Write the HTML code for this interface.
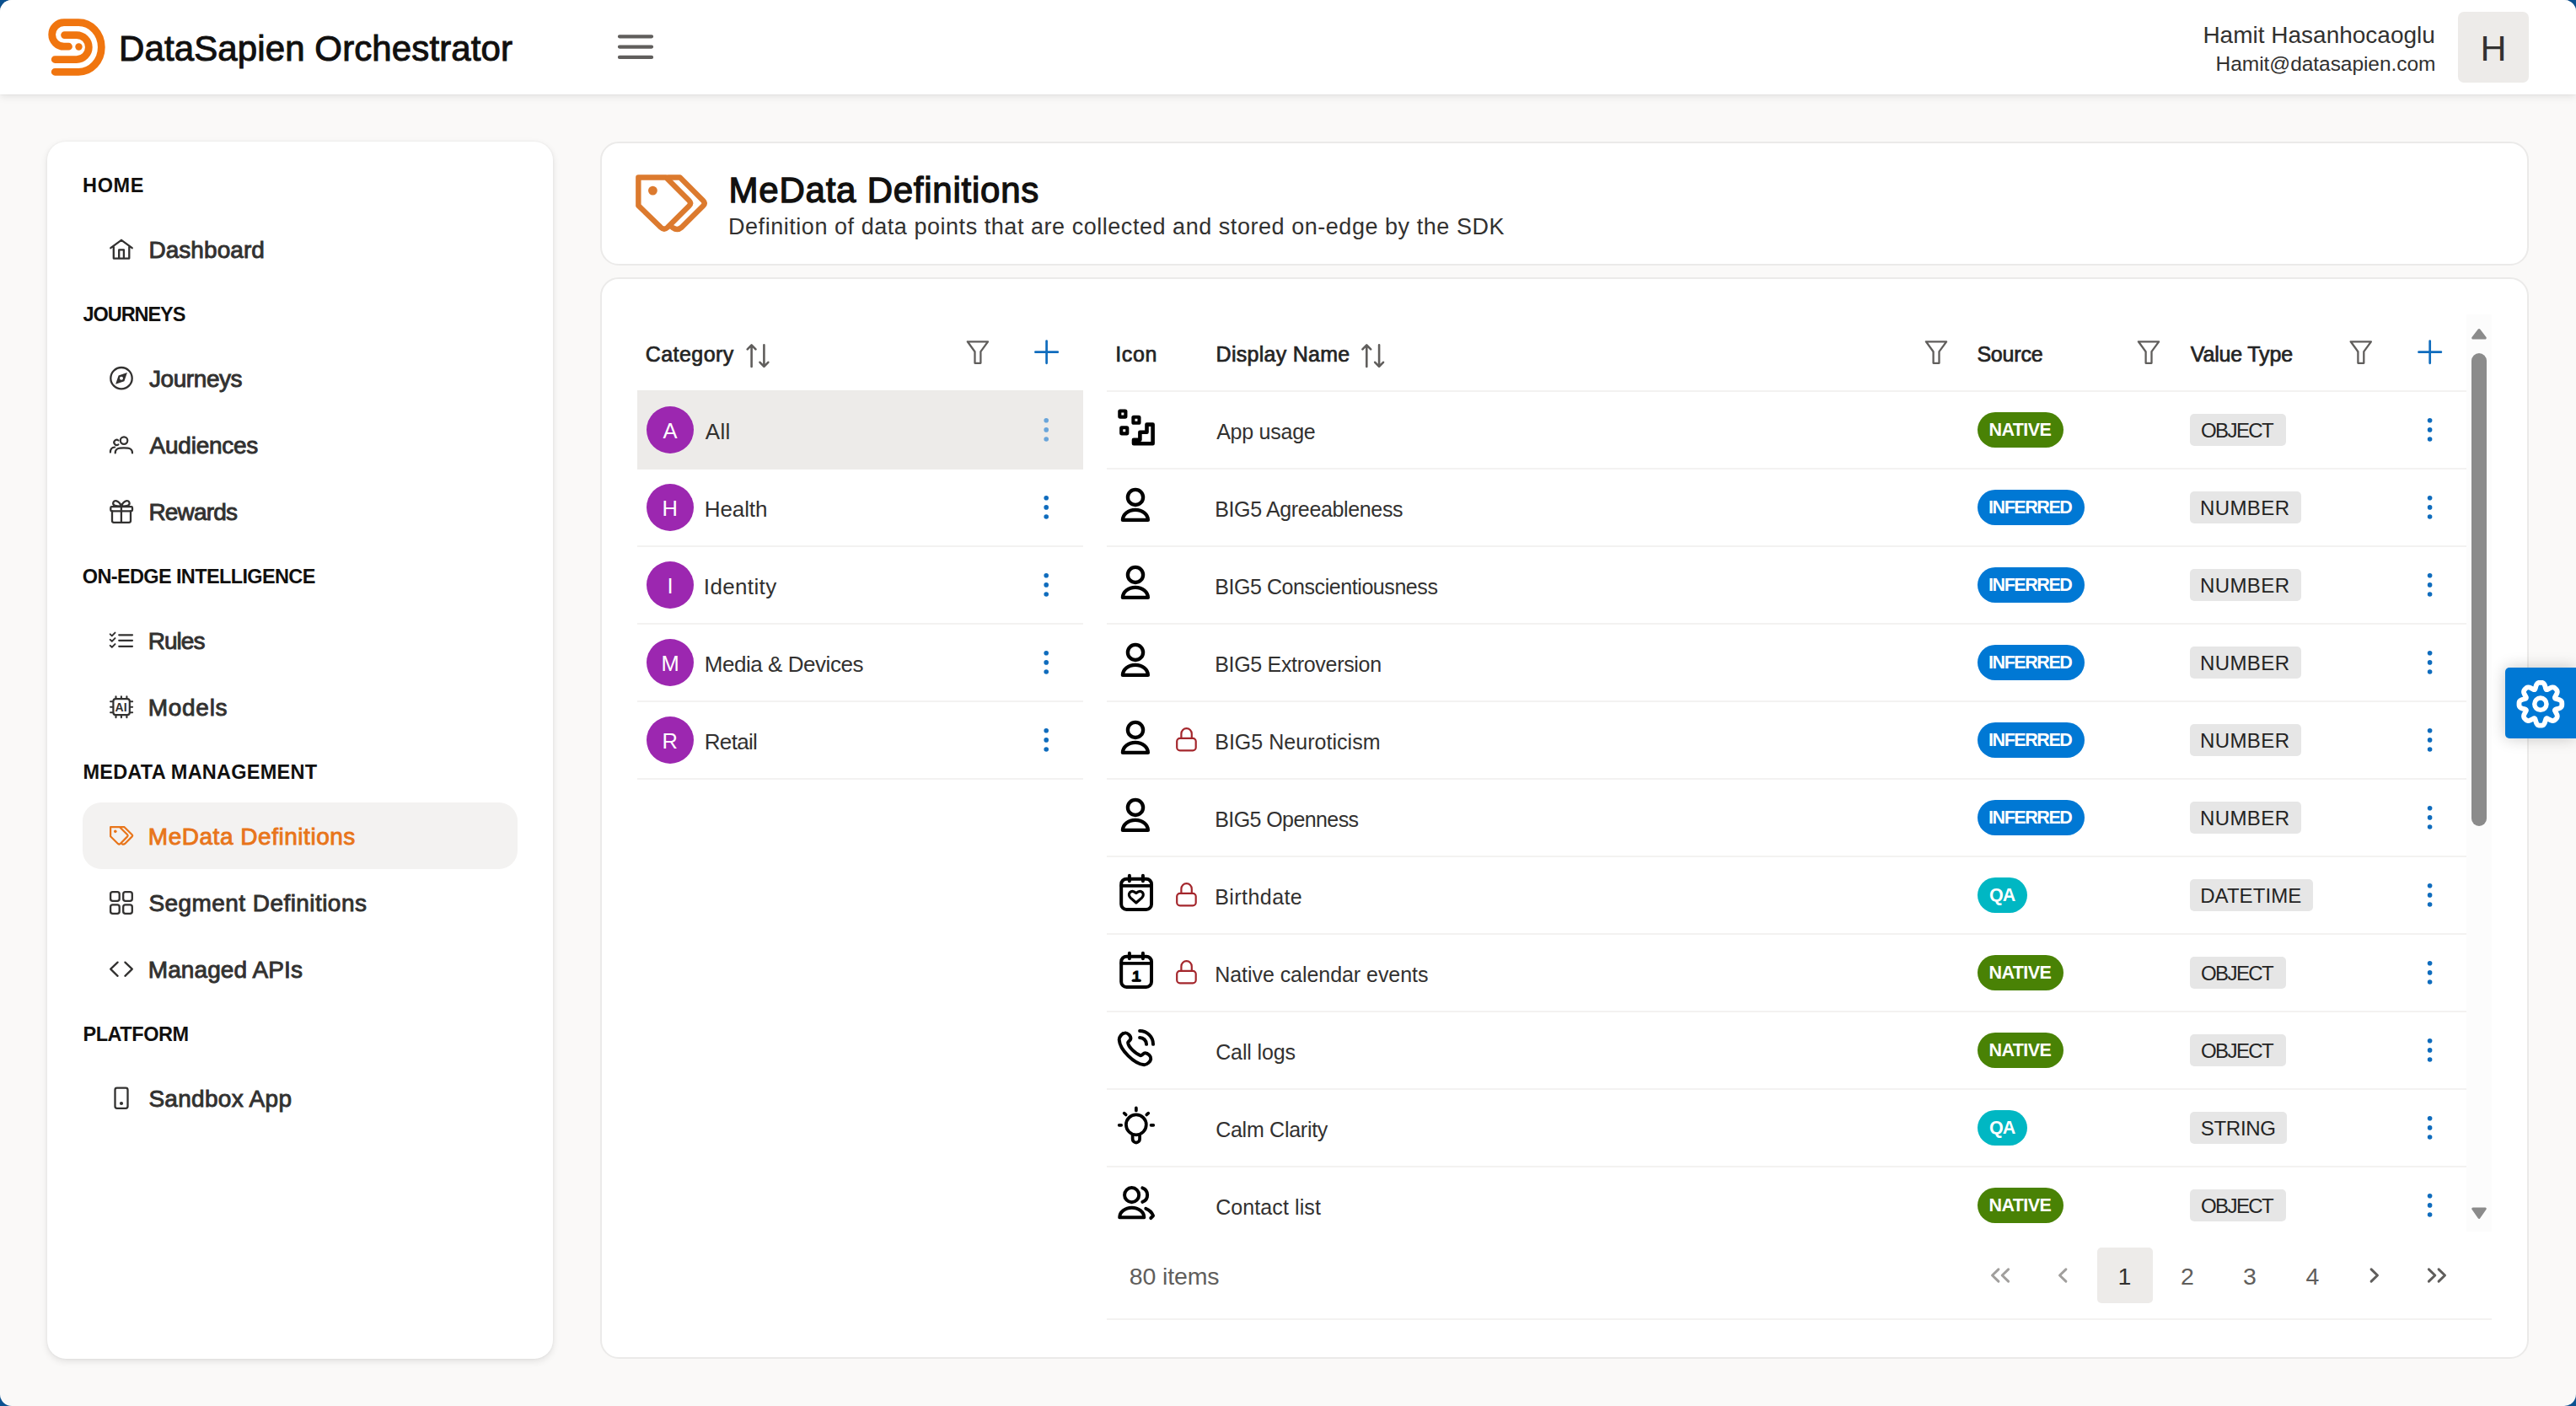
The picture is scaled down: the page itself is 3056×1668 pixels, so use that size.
<!DOCTYPE html>
<html lang="en">
<head>
<meta charset="utf-8">
<title>DataSapien Orchestrator</title>
<style>
*{box-sizing:border-box;margin:0;padding:0}
html,body{width:3056px;height:1668px;overflow:hidden}
body{background:#faf9f8;font-family:"Liberation Sans",sans-serif;color:#323130;position:relative}
svg{display:block;position:absolute;overflow:visible}
.t{position:absolute;white-space:nowrap;line-height:1}
.b{position:absolute}
#hdr{left:0;top:0;width:3056px;height:112px;background:#fff;box-shadow:0 3px 10px rgba(0,0,0,.09),0 0 2px rgba(0,0,0,.08)}
#side{left:56px;top:168px;width:600px;height:1444px;background:#fff;border-radius:22px;box-shadow:0 3px 8px rgba(0,0,0,.10),0 0 3px rgba(0,0,0,.06)}
.card{background:#fff;border:2px solid #ebeae9;border-radius:22px}
.hl{position:absolute;height:2px;background:#f3f2f1}
.av{position:absolute;left:767px;width:56px;height:56px;border-radius:50%;background:#9c27b0}
.bd{position:absolute;left:2346px;height:42px;border-radius:21px}
.vt{position:absolute;left:2598px;height:38px;border-radius:5px;background:#e6e6e6}
.s{fill:none;stroke-linecap:round;stroke-linejoin:round}
</style>
</head>
<body>
<div class="b" style="left:0;top:0;width:3056px;height:1668px;background:#0d5291"></div>
<div class="b" style="left:0;top:0;width:3056px;height:1668px;background:#faf9f8;border-radius:14px"></div>
<header>
<div class="b" id="hdr" style="border-radius:14px 14px 0 0"></div>
<svg style="left:50px;top:15px" width="85" height="82" viewBox="0 0 1457 1406"><g class="s" stroke="#f0750f" stroke-width="150"><path d="M260 1205H740A465 502 0 0 0 740 200H445A245 245 0 0 0 445 690H540"/><path d="M455 455H700A248 248 0 0 1 700 952H260"/></g><circle cx="745" cy="695" r="72" fill="#f0750f"/></svg>
<div class="t" style="left:141.0px;top:37.1px;font-size:42px;color:#11100f;-webkit-text-stroke:1px #11100f;letter-spacing:0.11px;">DataSapien Orchestrator</div>
<svg style="left:0;top:0" width="3056" height="112" viewBox="0 0 3056 112"><g class="s" stroke="#605e5c" stroke-width="4.3"><path d="M735 43.3H773M735 55.6H773M735 67.9H773"/></g></svg>
<div class="t" style="left:2613.4px;top:28.0px;font-size:28px;">Hamit Hasanhocaoglu</div>
<div class="t" style="left:2628.6px;top:64.3px;font-size:24.5px;letter-spacing:-0.05px;">Hamit@datasapien.com</div>
<div class="b" style="left:2916px;top:14px;width:84px;height:84px;border-radius:7px;background:#edebe9"></div>
<div class="t" style="left:2942.5px;top:36.4px;font-size:43px;">H</div>
</header>
<nav>
<div class="b" id="side"></div>
<div class="b" style="left:98px;top:952px;width:516px;height:79px;border-radius:22px;background:#f3f2f1"></div>
<div class="t" style="left:98.0px;top:208.8px;font-size:23.5px;font-weight:bold;color:#11100f;letter-spacing:0.67px;">HOME</div>
<div class="t" style="left:176.4px;top:283.1px;font-size:28px;-webkit-text-stroke:0.9px #323130;letter-spacing:0.06px;">Dashboard</div>
<div class="t" style="left:98.6px;top:361.9px;font-size:23.5px;font-weight:bold;color:#11100f;letter-spacing:-1.07px;">JOURNEYS</div>
<div class="t" style="left:177.0px;top:435.9px;font-size:28px;-webkit-text-stroke:0.9px #323130;letter-spacing:-0.43px;">Journeys</div>
<div class="t" style="left:177.6px;top:515.2px;font-size:28px;-webkit-text-stroke:0.9px #323130;letter-spacing:-0.25px;">Audiences</div>
<div class="t" style="left:176.4px;top:594.0px;font-size:28px;-webkit-text-stroke:0.9px #323130;letter-spacing:-0.83px;">Rewards</div>
<div class="t" style="left:97.8px;top:672.7px;font-size:23.5px;font-weight:bold;color:#11100f;letter-spacing:-0.63px;">ON-EDGE INTELLIGENCE</div>
<div class="t" style="left:175.8px;top:746.8px;font-size:28px;-webkit-text-stroke:0.9px #323130;letter-spacing:-1.00px;">Rules</div>
<div class="t" style="left:175.8px;top:826.1px;font-size:28px;-webkit-text-stroke:0.9px #323130;letter-spacing:0.70px;">Models</div>
<div class="t" style="left:98.4px;top:904.8px;font-size:23.5px;font-weight:bold;color:#11100f;letter-spacing:0.25px;">MEDATA MANAGEMENT</div>
<div class="t" style="left:175.8px;top:978.7px;font-size:28px;color:#e8751a;-webkit-text-stroke:0.9px #e8751a;letter-spacing:0.53px;">MeData Definitions</div>
<div class="t" style="left:176.4px;top:1057.6px;font-size:28px;-webkit-text-stroke:0.9px #323130;letter-spacing:0.44px;">Segment Definitions</div>
<div class="t" style="left:175.8px;top:1137.3px;font-size:28px;-webkit-text-stroke:0.9px #323130;letter-spacing:0.09px;">Managed APIs</div>
<div class="t" style="left:98.4px;top:1215.9px;font-size:23.5px;font-weight:bold;color:#11100f;letter-spacing:-0.43px;">PLATFORM</div>
<div class="t" style="left:176.4px;top:1290.1px;font-size:28px;-webkit-text-stroke:0.9px #323130;letter-spacing:0.30px;">Sandbox App</div>
<svg style="left:0;top:0" width="3056" height="1668" viewBox="0 0 3056 1668"><path class="s" stroke="#323130" stroke-width="2.3" d="M131.3 294.2L144 284.8L156.7 294.2M134.8 292.5V306.6H153.3V292.5M141.2 306.6V296.4H146.9V306.6" stroke-linejoin="miter" stroke-linecap="butt"/><circle class="s" stroke="#323130" stroke-width="2.3" cx="144" cy="448.7" r="12.7"/><path fill="#323130" fill-rule="evenodd" d="M150.9 441.9L147.4 452.2L137.1 455.7L140.6 445.4ZM144 446.8a2 2 0 1 0 0 4a2 2 0 1 0 0-4Z"/><circle class="s" stroke="#323130" stroke-width="2.2" cx="147.05" cy="522.6" r="4.25"/><path class="s" stroke="#323130" stroke-width="2.2" d="M136.7 537.4C136.7 532.6 139.5 531.4 146.9 531.4S157 532.6 157 537.4" stroke-linecap="butt"/><path class="s" stroke="#323130" stroke-width="2.2" d="M140.4 522.5A3.1 3.1 0 1 0 140.4 527.3"/><path class="s" stroke="#323130" stroke-width="2.2" d="M130.9 536.6C130.9 532.5 132.5 530.7 136.2 530.5" stroke-linecap="butt"/><rect class="s" stroke="#323130" stroke-width="2.3" x="131.3" y="601.2" width="25.7" height="5.1" rx="1.2"/><path class="s" stroke="#323130" stroke-width="2.3" d="M133 606.3V617.8a2 2 0 0 0 2 2H153a2 2 0 0 0 2-2V606.3M143.9 601.2V619.8"/><path class="s" stroke="#323130" stroke-width="2.3" d="M143.9 600.6C141.3 593.7 134.9 592.3 134.2 596.9C133.9 599.8 137 600.6 143.9 600.6C150.8 600.6 153.9 599.8 153.6 596.9C152.9 592.3 146.5 593.7 143.9 600.6"/><path class="s" stroke="#323130" stroke-width="2.2" d="M141.2 753.3H157"/><path class="s" stroke="#323130" stroke-width="2" d="M130.7 752.4l2.1 2l3.7-3.8" stroke-linejoin="miter"/><path class="s" stroke="#323130" stroke-width="2.2" d="M141.2 759.8H157"/><path class="s" stroke="#323130" stroke-width="2" d="M130.7 758.9l2.1 2l3.7-3.8" stroke-linejoin="miter"/><path class="s" stroke="#323130" stroke-width="2.2" d="M141.2 766.8H157"/><path class="s" stroke="#323130" stroke-width="2" d="M130.7 765.9l2.1 2l3.7-3.8" stroke-linejoin="miter"/><rect class="s" stroke="#323130" stroke-width="2.2" x="134.4" y="829.2" width="19.4" height="18.9" rx="2.8"/><path class="s" stroke="#323130" stroke-width="2.1" d="M137.5 826.3V828.5M137.5 848.8V851.2M131.1 832.2H133.3M154.9 832.2H157.1M143.9 826.3V828.5M143.9 848.8V851.2M131.1 838.7H133.3M154.9 838.7H157.1M150.4 826.3V828.5M150.4 848.8V851.2M131.1 845.2H133.3M154.9 845.2H157.1"/><text x="143.7" y="843.5" text-anchor="middle" font-family="Liberation Sans,sans-serif" font-weight="bold" font-size="14" fill="#323130" letter-spacing=".2">AI</text><rect class="s" stroke="#323130" stroke-width="2.3" x="131.1" y="1058.2" width="10.6" height="10.6" rx="2.6"/><rect class="s" stroke="#323130" stroke-width="2.3" x="146.2" y="1058.2" width="10.6" height="10.6" rx="2.6"/><rect class="s" stroke="#323130" stroke-width="2.3" x="131.1" y="1073.3" width="10.6" height="10.6" rx="2.6"/><rect class="s" stroke="#323130" stroke-width="2.3" x="146.2" y="1073.3" width="10.6" height="10.6" rx="2.6"/><path class="s" stroke="#323130" stroke-width="2.3" d="M139.6 1141.6L131.2 1149.7L139.6 1157.8M148.4 1141.6L156.8 1149.7L148.4 1157.8" stroke-linejoin="miter"/><rect class="s" stroke="#323130" stroke-width="2.3" x="136.5" y="1290.6" width="15" height="24.2" rx="2.3"/><circle cx="144" cy="1309" r="2.1" fill="#323130"/></svg><svg style="left:92.0px;top:961.4px" width="86.68" height="66.67" viewBox="0 0 1828 1406"><g class="s" stroke="#e8751a" stroke-width="46"><path d="M825 425H1055L1248 618Q1270 640 1248 662L1068 842Q1040 868 1012 842L825 660Z"/><path d="M1075 425H1172L1365 618Q1387 640 1365 662L1185 842Q1150 872 1112 845"/></g><circle cx="945" cy="535" r="38" fill="#e8751a"/></svg>
</nav>
<main>
<div class="b card" style="left:712px;top:168px;width:2288px;height:147px"></div>
<div class="b card" style="left:712px;top:329px;width:2288px;height:1283px"></div>
<svg style="left:640.0px;top:150.0px" width="260.03" height="200.00" viewBox="0 0 1828 1406"><g class="s" stroke="#dc7a2e" stroke-width="45"><path d="M825 425H1055L1248 618Q1270 640 1248 662L1068 842Q1040 868 1012 842L825 660Z"/><path d="M1075 425H1172L1365 618Q1387 640 1365 662L1185 842Q1150 872 1112 845"/></g><circle cx="945" cy="535" r="38" fill="#dc7a2e"/></svg>
<div class="t" style="left:864.6px;top:204.6px;font-size:42px;color:#11100f;-webkit-text-stroke:1.3px #11100f;letter-spacing:0.76px;">MeData Definitions</div>
<div class="t" style="left:864.0px;top:255.5px;font-size:27px;letter-spacing:0.54px;">Definition of data points that are collected and stored on-edge by the SDK</div>
<div class="t" style="left:765.8px;top:407.9px;font-size:25px;color:#242424;-webkit-text-stroke:0.7px #242424;letter-spacing:0.43px;">Category</div>
<div class="hl" style="left:756px;top:463px;width:529px"></div>
<div class="b" style="left:756px;top:463px;width:529px;height:94px;background:#edebe9"></div>
<div class="av" style="top:482px"></div>
<div class="t" style="left:786.5px;top:499.4px;font-size:25.5px;color:#fff;">A</div>
<div class="t" style="left:836.8px;top:498.9px;font-size:26px;letter-spacing:0.25px;">All</div>
<div class="hl" style="left:756px;top:647px;width:529px"></div>
<div class="av" style="top:574px"></div>
<div class="t" style="left:785.5px;top:591.4px;font-size:25.5px;color:#fff;">H</div>
<div class="t" style="left:835.8px;top:590.9px;font-size:26px;letter-spacing:-0.10px;">Health</div>
<div class="hl" style="left:756px;top:739px;width:529px"></div>
<div class="av" style="top:666px"></div>
<div class="t" style="left:791.5px;top:683.4px;font-size:25.5px;color:#fff;">I</div>
<div class="t" style="left:834.8px;top:682.9px;font-size:26px;letter-spacing:0.36px;">Identity</div>
<div class="hl" style="left:756px;top:831px;width:529px"></div>
<div class="av" style="top:758px"></div>
<div class="t" style="left:784.5px;top:775.4px;font-size:25.5px;color:#fff;">M</div>
<div class="t" style="left:835.8px;top:774.9px;font-size:26px;letter-spacing:-0.46px;">Media &amp; Devices</div>
<div class="hl" style="left:756px;top:923px;width:529px"></div>
<div class="av" style="top:850px"></div>
<div class="t" style="left:785.5px;top:867.4px;font-size:25.5px;color:#fff;">R</div>
<div class="t" style="left:835.8px;top:866.9px;font-size:26px;letter-spacing:-0.70px;">Retail</div>
<div class="t" style="left:1323.2px;top:407.8px;font-size:25px;color:#242424;-webkit-text-stroke:0.7px #242424;letter-spacing:0.67px;">Icon</div>
<div class="t" style="left:1442.6px;top:407.8px;font-size:25px;color:#242424;-webkit-text-stroke:0.7px #242424;letter-spacing:0.27px;">Display Name</div>
<div class="t" style="left:2345.4px;top:407.8px;font-size:25px;color:#242424;-webkit-text-stroke:0.7px #242424;letter-spacing:-0.20px;">Source</div>
<div class="t" style="left:2598.8px;top:407.8px;font-size:25px;color:#242424;-webkit-text-stroke:0.7px #242424;letter-spacing:-0.17px;">Value Type</div>
<div class="hl" style="left:1313px;top:463px;width:1613px"></div>
<div class="hl" style="left:1313px;top:555px;width:1613px"></div>
<div class="t" style="left:1443.2px;top:499.6px;font-size:25px;letter-spacing:-0.25px;">App usage</div>
<div class="bd" style="top:489px;width:102px;background:#498205"></div>
<div class="t" style="left:2359.5px;top:500.1px;font-size:21.5px;font-weight:bold;color:#fff;letter-spacing:-0.60px;">NATIVE</div>
<div class="vt" style="top:491px;width:114px"></div>
<div class="t" style="left:2611.0px;top:499.1px;font-size:24px;color:#242424;letter-spacing:-1.60px;">OBJECT</div>
<div class="hl" style="left:1313px;top:647px;width:1613px"></div>
<div class="t" style="left:1441.2px;top:591.6px;font-size:25px;letter-spacing:-0.35px;">BIG5 Agreeableness</div>
<div class="bd" style="top:581px;width:127px;background:#0078d4"></div>
<div class="t" style="left:2359.0px;top:592.1px;font-size:21.5px;font-weight:bold;color:#fff;letter-spacing:-1.43px;">INFERRED</div>
<div class="vt" style="top:583px;width:131.5px"></div>
<div class="t" style="left:2610.0px;top:591.1px;font-size:24px;color:#242424;letter-spacing:0.40px;">NUMBER</div>
<div class="hl" style="left:1313px;top:739px;width:1613px"></div>
<div class="t" style="left:1441.2px;top:683.6px;font-size:25px;letter-spacing:-0.43px;">BIG5 Conscientiousness</div>
<div class="bd" style="top:673px;width:127px;background:#0078d4"></div>
<div class="t" style="left:2359.0px;top:684.1px;font-size:21.5px;font-weight:bold;color:#fff;letter-spacing:-1.43px;">INFERRED</div>
<div class="vt" style="top:675px;width:131.5px"></div>
<div class="t" style="left:2610.0px;top:683.1px;font-size:24px;color:#242424;letter-spacing:0.40px;">NUMBER</div>
<div class="hl" style="left:1313px;top:831px;width:1613px"></div>
<div class="t" style="left:1441.2px;top:775.6px;font-size:25px;letter-spacing:-0.31px;">BIG5 Extroversion</div>
<div class="bd" style="top:765px;width:127px;background:#0078d4"></div>
<div class="t" style="left:2359.0px;top:776.1px;font-size:21.5px;font-weight:bold;color:#fff;letter-spacing:-1.43px;">INFERRED</div>
<div class="vt" style="top:767px;width:131.5px"></div>
<div class="t" style="left:2610.0px;top:775.1px;font-size:24px;color:#242424;letter-spacing:0.40px;">NUMBER</div>
<div class="hl" style="left:1313px;top:923px;width:1613px"></div>
<div class="t" style="left:1441.2px;top:867.6px;font-size:25px;letter-spacing:0.03px;">BIG5 Neuroticism</div>
<div class="bd" style="top:857px;width:127px;background:#0078d4"></div>
<div class="t" style="left:2359.0px;top:868.1px;font-size:21.5px;font-weight:bold;color:#fff;letter-spacing:-1.43px;">INFERRED</div>
<div class="vt" style="top:859px;width:131.5px"></div>
<div class="t" style="left:2610.0px;top:867.1px;font-size:24px;color:#242424;letter-spacing:0.40px;">NUMBER</div>
<div class="hl" style="left:1313px;top:1015px;width:1613px"></div>
<div class="t" style="left:1441.2px;top:959.6px;font-size:25px;letter-spacing:-0.58px;">BIG5 Openness</div>
<div class="bd" style="top:949px;width:127px;background:#0078d4"></div>
<div class="t" style="left:2359.0px;top:960.1px;font-size:21.5px;font-weight:bold;color:#fff;letter-spacing:-1.43px;">INFERRED</div>
<div class="vt" style="top:951px;width:131.5px"></div>
<div class="t" style="left:2610.0px;top:959.1px;font-size:24px;color:#242424;letter-spacing:0.40px;">NUMBER</div>
<div class="hl" style="left:1313px;top:1107px;width:1613px"></div>
<div class="t" style="left:1441.2px;top:1051.6px;font-size:25px;letter-spacing:0.44px;">Birthdate</div>
<div class="bd" style="top:1041px;width:59px;background:#00b7c3"></div>
<div class="t" style="left:2360.0px;top:1052.1px;font-size:21.5px;font-weight:bold;color:#fff;letter-spacing:-1.00px;">QA</div>
<div class="vt" style="top:1043px;width:146px"></div>
<div class="t" style="left:2610.2px;top:1051.1px;font-size:24px;color:#242424;letter-spacing:0.07px;">DATETIME</div>
<div class="hl" style="left:1313px;top:1199px;width:1613px"></div>
<div class="t" style="left:1441.2px;top:1143.6px;font-size:25px;letter-spacing:-0.05px;">Native calendar events</div>
<div class="bd" style="top:1133px;width:102px;background:#498205"></div>
<div class="t" style="left:2359.5px;top:1144.1px;font-size:21.5px;font-weight:bold;color:#fff;letter-spacing:-0.60px;">NATIVE</div>
<div class="vt" style="top:1135px;width:114px"></div>
<div class="t" style="left:2611.0px;top:1143.1px;font-size:24px;color:#242424;letter-spacing:-1.60px;">OBJECT</div>
<div class="hl" style="left:1313px;top:1291px;width:1613px"></div>
<div class="t" style="left:1442.2px;top:1235.6px;font-size:25px;letter-spacing:-0.12px;">Call logs</div>
<div class="bd" style="top:1225px;width:102px;background:#498205"></div>
<div class="t" style="left:2359.5px;top:1236.1px;font-size:21.5px;font-weight:bold;color:#fff;letter-spacing:-0.60px;">NATIVE</div>
<div class="vt" style="top:1227px;width:114px"></div>
<div class="t" style="left:2611.0px;top:1235.1px;font-size:24px;color:#242424;letter-spacing:-1.60px;">OBJECT</div>
<div class="hl" style="left:1313px;top:1383px;width:1613px"></div>
<div class="t" style="left:1442.2px;top:1327.6px;font-size:25px;letter-spacing:-0.27px;">Calm Clarity</div>
<div class="bd" style="top:1317px;width:59px;background:#00b7c3"></div>
<div class="t" style="left:2360.0px;top:1328.1px;font-size:21.5px;font-weight:bold;color:#fff;letter-spacing:-1.00px;">QA</div>
<div class="vt" style="top:1319px;width:115px"></div>
<div class="t" style="left:2610.8px;top:1327.1px;font-size:24px;color:#242424;letter-spacing:-0.30px;">STRING</div>
<div class="t" style="left:1442.2px;top:1419.6px;font-size:25px;letter-spacing:0.09px;">Contact list</div>
<div class="bd" style="top:1409px;width:102px;background:#498205"></div>
<div class="t" style="left:2359.5px;top:1420.1px;font-size:21.5px;font-weight:bold;color:#fff;letter-spacing:-0.60px;">NATIVE</div>
<div class="vt" style="top:1411px;width:114px"></div>
<div class="t" style="left:2611.0px;top:1419.1px;font-size:24px;color:#242424;letter-spacing:-1.60px;">OBJECT</div>
<svg style="left:0;top:0" width="3056" height="1668" viewBox="0 0 3056 1668"><path class="s" stroke="#605e5c" stroke-width="2.6" stroke-linejoin="miter" d="M891.6 435V409.6M886.7 414.4L891.6 409.4L896.5 414.4M906.4 409.2V434.6M901.5 429.8L906.4 434.8L911.3 429.8"/><path class="s" stroke="#605e5c" stroke-width="2.3" stroke-linejoin="miter" stroke-linecap="butt" d="M1147.8 405.3H1172.0L1163.4 417.2V430.8H1156.5V417.2Z"/><path class="s" stroke="#0f6cbd" stroke-width="2.7" d="M1228.4 417.7H1254.8M1241.6 404.6V430.8"/><path class="s" stroke="#605e5c" stroke-width="2.6" stroke-linejoin="miter" d="M1621.3 435V409.6M1616.4 414.4L1621.3 409.4L1626.2 414.4M1636.1 409.2V434.6M1631.2 429.8L1636.1 434.8L1641.0 429.8"/><path class="s" stroke="#605e5c" stroke-width="2.3" stroke-linejoin="miter" stroke-linecap="butt" d="M2284.9 405.3H2309.1L2300.5 417.2V430.8H2293.6V417.2Z"/><path class="s" stroke="#605e5c" stroke-width="2.3" stroke-linejoin="miter" stroke-linecap="butt" d="M2536.9 405.3H2561.1L2552.5 417.2V430.8H2545.6V417.2Z"/><path class="s" stroke="#605e5c" stroke-width="2.3" stroke-linejoin="miter" stroke-linecap="butt" d="M2788.7 405.3H2812.9L2804.3 417.2V430.8H2797.4V417.2Z"/><path class="s" stroke="#0f6cbd" stroke-width="2.7" d="M2869.5 417.7H2895.9M2882.7 404.6V430.8"/><circle cx="1241.2" cy="498.8" r="2.8" fill="#6aa5da"/><circle cx="1241.2" cy="509.9" r="2.8" fill="#6aa5da"/><circle cx="1241.2" cy="521.0" r="2.8" fill="#6aa5da"/><circle cx="1241.2" cy="590.8" r="2.8" fill="#0f6cbd"/><circle cx="1241.2" cy="601.9" r="2.8" fill="#0f6cbd"/><circle cx="1241.2" cy="613.0" r="2.8" fill="#0f6cbd"/><circle cx="1241.2" cy="682.8" r="2.8" fill="#0f6cbd"/><circle cx="1241.2" cy="693.9" r="2.8" fill="#0f6cbd"/><circle cx="1241.2" cy="705.0" r="2.8" fill="#0f6cbd"/><circle cx="1241.2" cy="774.8" r="2.8" fill="#0f6cbd"/><circle cx="1241.2" cy="785.9" r="2.8" fill="#0f6cbd"/><circle cx="1241.2" cy="797.0" r="2.8" fill="#0f6cbd"/><circle cx="1241.2" cy="866.8" r="2.8" fill="#0f6cbd"/><circle cx="1241.2" cy="877.9" r="2.8" fill="#0f6cbd"/><circle cx="1241.2" cy="889.0" r="2.8" fill="#0f6cbd"/><circle cx="2882.6" cy="498.8" r="2.8" fill="#0f6cbd"/><circle cx="2882.6" cy="509.9" r="2.8" fill="#0f6cbd"/><circle cx="2882.6" cy="521.0" r="2.8" fill="#0f6cbd"/><circle cx="2882.6" cy="590.8" r="2.8" fill="#0f6cbd"/><circle cx="2882.6" cy="601.9" r="2.8" fill="#0f6cbd"/><circle cx="2882.6" cy="613.0" r="2.8" fill="#0f6cbd"/><circle cx="2882.6" cy="682.8" r="2.8" fill="#0f6cbd"/><circle cx="2882.6" cy="693.9" r="2.8" fill="#0f6cbd"/><circle cx="2882.6" cy="705.0" r="2.8" fill="#0f6cbd"/><circle cx="2882.6" cy="774.8" r="2.8" fill="#0f6cbd"/><circle cx="2882.6" cy="785.9" r="2.8" fill="#0f6cbd"/><circle cx="2882.6" cy="797.0" r="2.8" fill="#0f6cbd"/><circle cx="2882.6" cy="866.8" r="2.8" fill="#0f6cbd"/><circle cx="2882.6" cy="877.9" r="2.8" fill="#0f6cbd"/><circle cx="2882.6" cy="889.0" r="2.8" fill="#0f6cbd"/><circle cx="2882.6" cy="958.8" r="2.8" fill="#0f6cbd"/><circle cx="2882.6" cy="969.9" r="2.8" fill="#0f6cbd"/><circle cx="2882.6" cy="981.0" r="2.8" fill="#0f6cbd"/><circle cx="2882.6" cy="1050.8" r="2.8" fill="#0f6cbd"/><circle cx="2882.6" cy="1061.9" r="2.8" fill="#0f6cbd"/><circle cx="2882.6" cy="1073.0" r="2.8" fill="#0f6cbd"/><circle cx="2882.6" cy="1142.8" r="2.8" fill="#0f6cbd"/><circle cx="2882.6" cy="1153.9" r="2.8" fill="#0f6cbd"/><circle cx="2882.6" cy="1165.0" r="2.8" fill="#0f6cbd"/><circle cx="2882.6" cy="1234.8" r="2.8" fill="#0f6cbd"/><circle cx="2882.6" cy="1245.9" r="2.8" fill="#0f6cbd"/><circle cx="2882.6" cy="1257.0" r="2.8" fill="#0f6cbd"/><circle cx="2882.6" cy="1326.8" r="2.8" fill="#0f6cbd"/><circle cx="2882.6" cy="1337.9" r="2.8" fill="#0f6cbd"/><circle cx="2882.6" cy="1349.0" r="2.8" fill="#0f6cbd"/><circle cx="2882.6" cy="1418.8" r="2.8" fill="#0f6cbd"/><circle cx="2882.6" cy="1429.9" r="2.8" fill="#0f6cbd"/><circle cx="2882.6" cy="1441.0" r="2.8" fill="#0f6cbd"/><rect class="s" stroke="#a4262c" stroke-width="2.2" x="1396.2" y="875.9" width="22.5" height="14.4" rx="3.6"/><path class="s" stroke="#a4262c" stroke-width="2.2" d="M1401.4 875.9V870.4A6.2 6.2 0 0 1 1413.8 870.4V875.9"/><rect class="s" stroke="#a4262c" stroke-width="2.2" x="1396.2" y="1059.9" width="22.5" height="14.4" rx="3.6"/><path class="s" stroke="#a4262c" stroke-width="2.2" d="M1401.4 1059.9V1054.4A6.2 6.2 0 0 1 1413.8 1054.4V1059.9"/><rect class="s" stroke="#a4262c" stroke-width="2.2" x="1396.2" y="1151.9" width="22.5" height="14.4" rx="3.6"/><path class="s" stroke="#a4262c" stroke-width="2.2" d="M1401.4 1151.9V1146.4A6.2 6.2 0 0 1 1413.8 1146.4V1151.9"/><g class="s" stroke="#000" stroke-width="4.1" stroke-linejoin="round"><rect x="1328.3" y="487.5" width="7.1" height="7.1" rx=".6"/><rect x="1344.4" y="494.7" width="7.1" height="7.1" rx=".6"/><rect x="1330.2" y="507.3" width="7.1" height="7.1" rx=".6"/><path stroke-width="4.6" d="M1345 526.2H1367.6V503.6H1360.5V512.7H1352.4V521.7H1345Z"/></g><g class="s" stroke="#000" stroke-width="4.3" transform="translate(0 0)"><circle cx="1347" cy="589.9" r="9.1"/><path d="M1331.9 616.9A15 12.1 0 0 1 1361.9 616.9Z"/></g><g class="s" stroke="#000" stroke-width="4.3" transform="translate(0 92)"><circle cx="1347" cy="589.9" r="9.1"/><path d="M1331.9 616.9A15 12.1 0 0 1 1361.9 616.9Z"/></g><g class="s" stroke="#000" stroke-width="4.3" transform="translate(0 184)"><circle cx="1347" cy="589.9" r="9.1"/><path d="M1331.9 616.9A15 12.1 0 0 1 1361.9 616.9Z"/></g><g class="s" stroke="#000" stroke-width="4.3" transform="translate(0 276)"><circle cx="1347" cy="589.9" r="9.1"/><path d="M1331.9 616.9A15 12.1 0 0 1 1361.9 616.9Z"/></g><g class="s" stroke="#000" stroke-width="4.3" transform="translate(0 368)"><circle cx="1347" cy="589.9" r="9.1"/><path d="M1331.9 616.9A15 12.1 0 0 1 1361.9 616.9Z"/></g></svg><svg style="left:1315px;top:1025px" width="70" height="70" viewBox="0 0 1406 1406"><g class="s" stroke="#000" stroke-width="80"><rect x="305" y="355" width="720" height="730" rx="125"/><path stroke-width="72" d="M305 520H1025"/><path d="M500 275V405M822 275V405"/><path stroke-width="64" d="M660 925L525 805C435 720 535 585 660 692C785 585 885 720 795 805Z"/></g></svg><svg style="left:1315px;top:1117px" width="70" height="70" viewBox="0 0 1406 1406"><g class="s" stroke="#000" stroke-width="80"><rect x="305" y="355" width="720" height="730" rx="125"/><path stroke-width="72" d="M305 520H1025"/><path d="M500 275V405M822 275V405"/></g><text x="665" y="945" text-anchor="middle" font-family="Liberation Sans,sans-serif" font-weight="bold" font-size="340" fill="#000" stroke="#000" stroke-width="22">1</text><g class="s" stroke="#000" stroke-width="62"><path d="M585 930H750"/></g><g></g></svg><svg style="left:1315px;top:1210px" width="70" height="70" viewBox="0 0 1406 1406"><g class="s" stroke="#000" stroke-width="80"><path d="M390 310C450 300 540 380 530 450C525 490 470 510 465 540C470 640 640 810 770 850C800 850 830 790 875 790C940 790 1020 870 1010 930C1000 990 920 1070 850 1070C620 1050 270 720 255 470C255 400 330 310 390 310Z"/><path d="M745 420A160 160 0 0 1 905 580M745 260A320 320 0 0 1 1065 580"/></g></svg><svg style="left:1315px;top:1300px" width="70" height="70" viewBox="0 0 1406 1406"><g class="s" stroke="#000" stroke-width="80"><g stroke-width="75"><circle cx="660" cy="690" r="240"/><path d="M575 925V1030A85 85 0 0 0 745 1030V925"/><path d="M660 290V350M255 700H305M1015 700H1070M375 415L415 450M950 415L910 450"/></g></g></svg><svg style="left:1315px;top:1392px" width="70" height="70" viewBox="0 0 1406 1406"><g class="s" stroke="#000" stroke-width="80"><circle cx="555" cy="515" r="172"/><path d="M265 1050A292 232 0 0 1 850 1050Z"/><path d="M810 350A175 175 0 0 1 810 680M890 840C970 870 1040 940 1065 1010L1010 1065"/></g></svg>
<div class="b" style="left:1313px;top:1461px;width:1645px;height:104px;background:#fff"></div>
<div class="b" style="left:2926px;top:373px;width:30px;height:1088px;background:#fcfcfc"></div>
<div class="b" style="left:2932px;top:419px;width:18px;height:561px;border-radius:9px;background:#8b8b8b"></div>
<svg style="left:0;top:0" width="3056" height="1668" viewBox="0 0 3056 1668"><g fill="#8b8b8b" stroke="#8b8b8b" stroke-width="3" stroke-linejoin="round"><path d="M2941 391.5L2948.3 401H2933.7Z"/><path d="M2941 1444.5L2948.3 1434H2933.7Z"/></g></svg>
<div class="t" style="left:1339.8px;top:1500.1px;font-size:28.5px;color:#605e5c;letter-spacing:-0.14px;">80 items</div>
<div class="b" style="left:2488px;top:1480px;width:66px;height:66px;border-radius:5px;background:#edebe9"></div>
<div class="t" style="left:2512.5px;top:1500.1px;font-size:28.5px;">1</div>
<div class="t" style="left:2587.0px;top:1500.1px;font-size:28.5px;color:#605e5c;">2</div>
<div class="t" style="left:2661.0px;top:1500.1px;font-size:28.5px;color:#605e5c;">3</div>
<div class="t" style="left:2735.5px;top:1500.1px;font-size:28.5px;color:#605e5c;">4</div>
<div class="hl" style="left:1313px;top:1564px;width:1643px"></div>
<svg style="left:0;top:0" width="3056" height="1668" viewBox="0 0 3056 1668"><path class="s" stroke="#a19f9d" stroke-width="3" stroke-linejoin="miter" stroke-linecap="butt" d="M2370.9 1505.8L2363.5 1513L2370.9 1520.2"/><path class="s" stroke="#a19f9d" stroke-width="3" stroke-linejoin="miter" stroke-linecap="butt" d="M2382.6 1505.8L2375.2 1513L2382.6 1520.2"/><path class="s" stroke="#a19f9d" stroke-width="3" stroke-linejoin="miter" stroke-linecap="butt" d="M2450.9 1505.8L2443.5 1513L2450.9 1520.2"/><path class="s" stroke="#605e5c" stroke-width="3" stroke-linejoin="miter" stroke-linecap="butt" d="M2813.1 1505.8L2820.5 1513L2813.1 1520.2"/><path class="s" stroke="#605e5c" stroke-width="3" stroke-linejoin="miter" stroke-linecap="butt" d="M2881.4 1505.8L2888.8 1513L2881.4 1520.2"/><path class="s" stroke="#605e5c" stroke-width="3" stroke-linejoin="miter" stroke-linecap="butt" d="M2893.1 1505.8L2900.5 1513L2893.1 1520.2"/></svg>
</main>
<div class="b" style="left:2972px;top:792px;width:84px;height:84px;border-radius:5px 0 0 5px;background:#0078d4;box-shadow:0 0 18px rgba(0,0,0,.22)"></div>
<svg style="left:0;top:0" width="3056" height="1668" viewBox="0 0 3056 1668"><g class="s" stroke="#fff" stroke-width="5.8"><path d="M3013.9 809.8L3014.9 809.8L3015.9 809.9L3016.9 810.2L3017.7 810.9L3018.5 812.0L3019.1 813.4L3019.6 815.0L3020.0 816.5L3020.4 817.6L3021.0 818.2L3021.8 818.2L3022.8 817.6L3024.2 816.9L3025.6 816.1L3027.1 815.5L3028.4 815.3L3029.5 815.5L3030.4 815.9L3031.2 816.5L3031.9 817.2L3032.6 817.9L3033.2 818.7L3033.6 819.6L3033.8 820.7L3033.6 822.0L3033.0 823.5L3032.2 824.9L3031.5 826.3L3030.9 827.3L3030.9 828.1L3031.5 828.7L3032.6 829.1L3034.1 829.5L3035.7 830.0L3037.1 830.6L3038.2 831.4L3038.9 832.2L3039.2 833.2L3039.3 834.2L3039.3 835.2L3039.3 836.2L3039.2 837.2L3038.9 838.2L3038.2 839.0L3037.1 839.8L3035.7 840.4L3034.1 840.9L3032.6 841.3L3031.5 841.7L3030.9 842.3L3030.9 843.1L3031.5 844.1L3032.2 845.5L3033.0 846.9L3033.6 848.4L3033.8 849.7L3033.6 850.8L3033.2 851.7L3032.6 852.5L3031.9 853.2L3031.2 853.9L3030.4 854.5L3029.5 854.9L3028.4 855.1L3027.1 854.9L3025.6 854.3L3024.2 853.5L3022.8 852.8L3021.8 852.2L3021.0 852.2L3020.4 852.8L3020.0 853.9L3019.6 855.4L3019.1 857.0L3018.5 858.4L3017.7 859.5L3016.9 860.2L3015.9 860.5L3014.9 860.6L3013.9 860.6L3012.9 860.6L3011.9 860.5L3010.9 860.2L3010.1 859.5L3009.3 858.4L3008.7 857.0L3008.2 855.4L3007.8 853.9L3007.4 852.8L3006.8 852.2L3006.0 852.2L3005.0 852.8L3003.6 853.5L3002.2 854.3L3000.7 854.9L2999.4 855.1L2998.3 854.9L2997.4 854.5L2996.6 853.9L2995.9 853.2L2995.2 852.5L2994.6 851.7L2994.2 850.8L2994.0 849.7L2994.2 848.4L2994.8 846.9L2995.6 845.5L2996.3 844.1L2996.9 843.1L2996.9 842.3L2996.3 841.7L2995.2 841.3L2993.7 840.9L2992.1 840.4L2990.7 839.8L2989.6 839.0L2988.9 838.2L2988.6 837.2L2988.5 836.2L2988.5 835.2L2988.5 834.2L2988.6 833.2L2988.9 832.2L2989.6 831.4L2990.7 830.6L2992.1 830.0L2993.7 829.5L2995.2 829.1L2996.3 828.7L2996.9 828.1L2996.9 827.3L2996.3 826.3L2995.6 824.9L2994.8 823.5L2994.2 822.0L2994.0 820.7L2994.2 819.6L2994.6 818.7L2995.2 817.9L2995.9 817.2L2996.6 816.5L2997.4 815.9L2998.3 815.5L2999.4 815.3L3000.7 815.5L3002.2 816.1L3003.6 816.9L3005.0 817.6L3006.0 818.2L3006.8 818.2L3007.4 817.6L3007.8 816.5L3008.2 815.0L3008.7 813.4L3009.3 812.0L3010.1 810.9L3010.9 810.2L3011.9 809.9L3012.9 809.8Z"/><circle cx="3013.9" cy="835.2" r="7.1" stroke-width="5.5"/></g></svg>
</body>
</html>
